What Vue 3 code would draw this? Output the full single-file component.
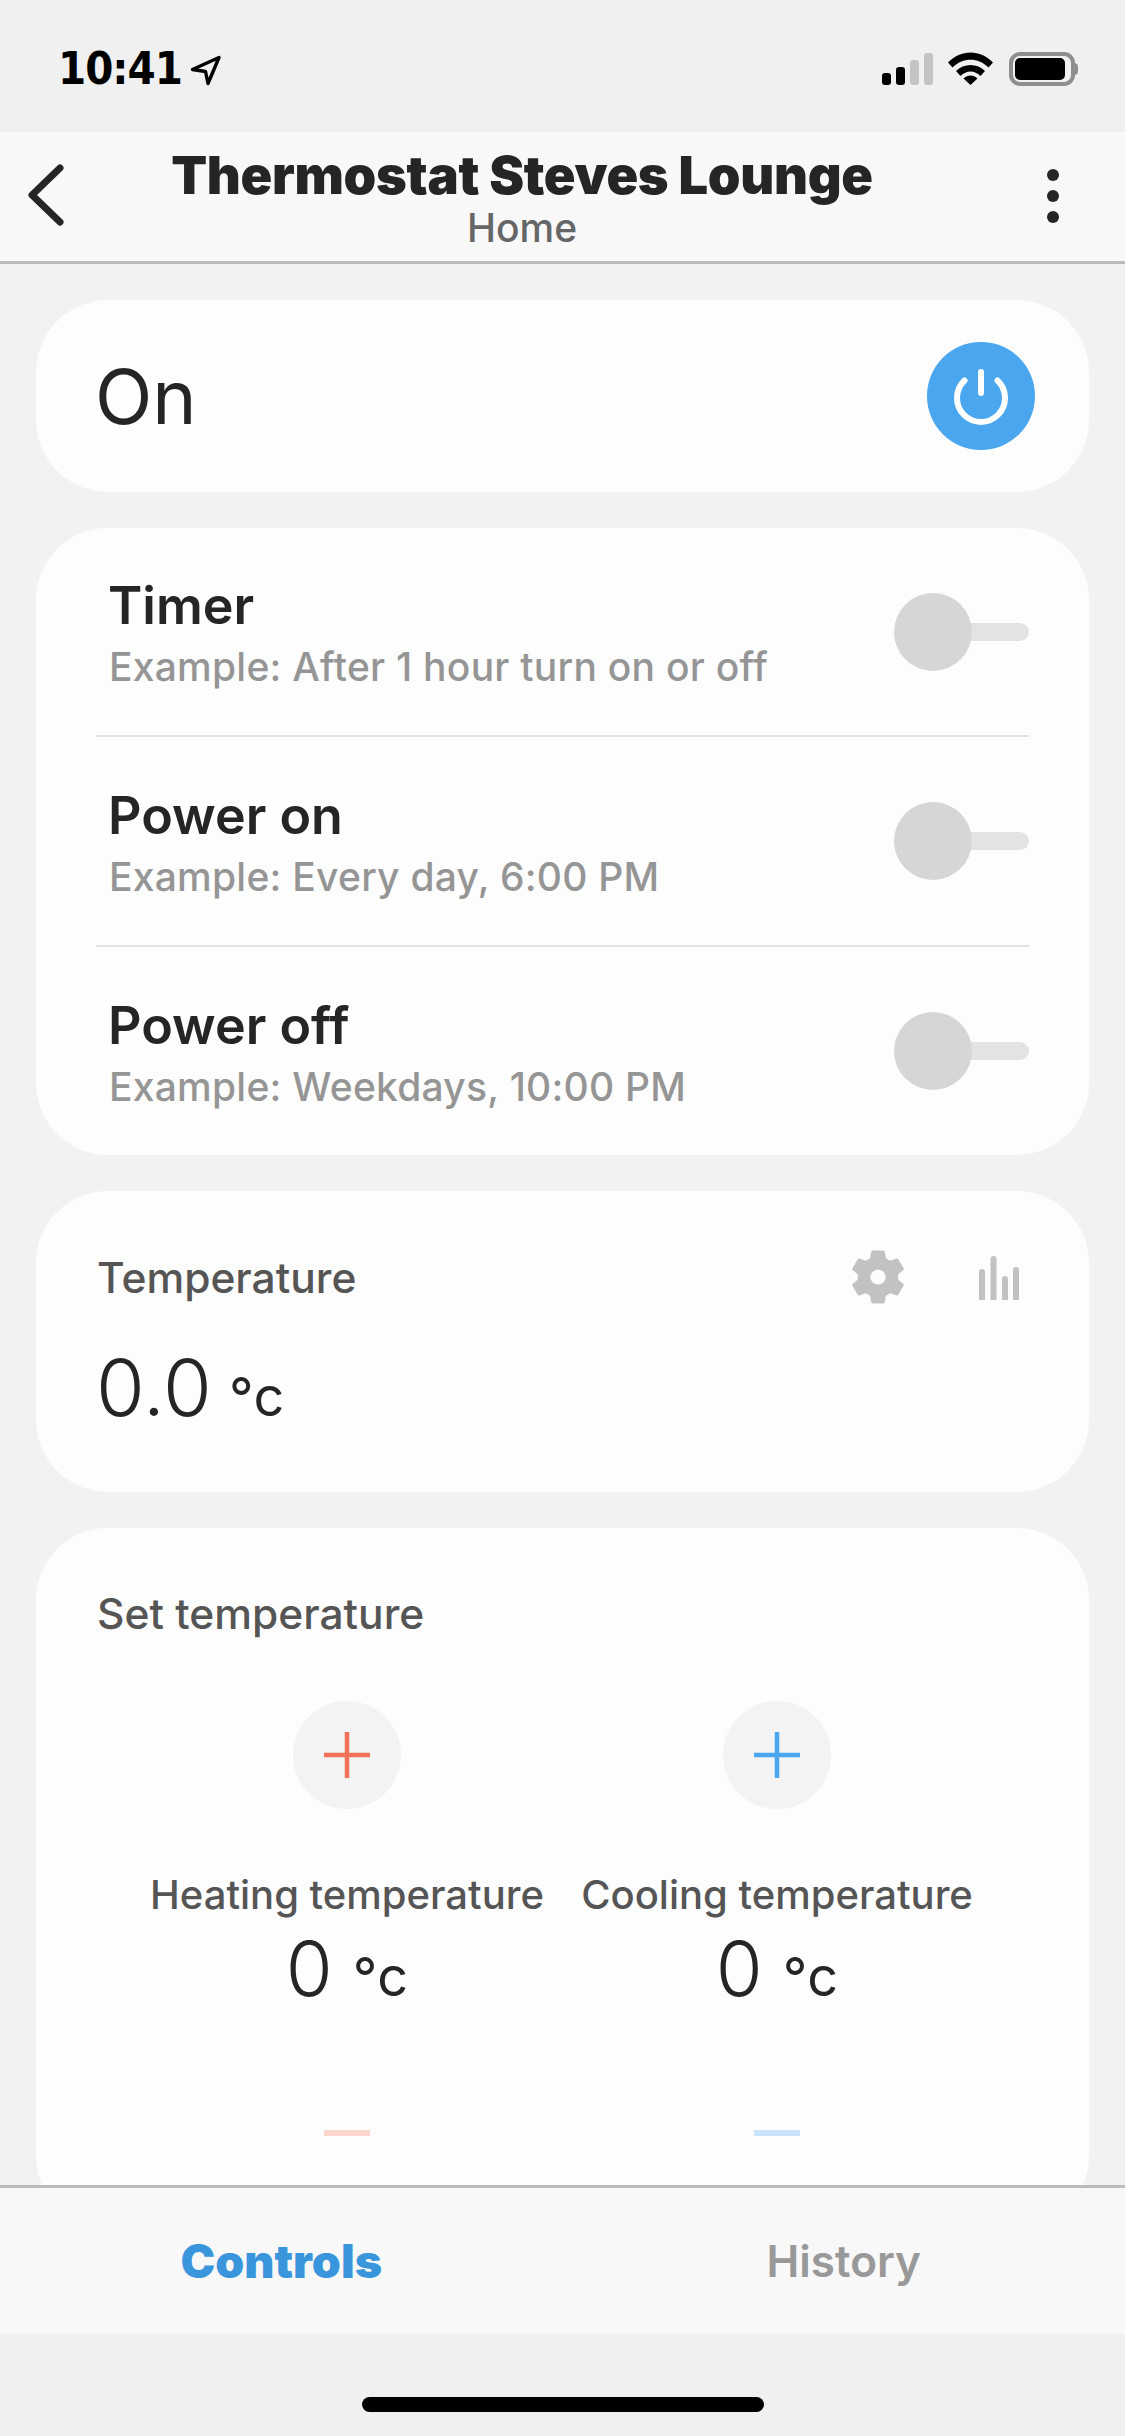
<script setup>
const rows = [
  { title: 'Timer', sub: 'Example: After 1 hour turn on or off' },
  { title: 'Power on', sub: 'Example: Every day, 6:00 PM' },
  { title: 'Power off', sub: 'Example: Weekdays, 10:00 PM' },
]
const setpoints = [
  { label: 'Heating temperature', plus: '#f0705a', minus: '#fcd5cf' },
  { label: 'Cooling temperature', plus: '#4aa6ef', minus: '#c9e3fa' },
]
const pt = (r, deg) => {
  const a = (deg * Math.PI) / 180
  return `${(27 + r * Math.cos(a)).toFixed(2)} ${(27 + r * Math.sin(a)).toFixed(2)}`
}
let gear = ''
for (let k = 0; k < 6; k++) {
  const c = -90 + 60 * k
  gear += `${k ? 'L' : 'M'}${pt(19, c - 20)}L${pt(25.5, c - 12)}L${pt(25.5, c + 12)}L${pt(19, c + 20)}`
}
gear += 'ZM27 18a9 9 0 1 0 0.01 0Z'
</script>

<template>
  <div class="phone">
    <div class="status">
      <div class="clock">
        <span class="time">10:41</span>
        <svg class="arrow" width="31" height="31" viewBox="0 0 31 31"><path d="M2.5 14.5 29 2.5 18 28.5 15.5 16.5Z" fill="none" stroke="#000" stroke-width="3.4" stroke-linejoin="round"/></svg>
      </div>
      <div class="indicators">
        <div class="signal">
          <i class="s1"></i><i class="s2"></i><i class="s3"></i><i class="s4"></i>
        </div>
        <svg width="45" height="33" viewBox="0 0 45 33"><path d="M0 10.5C12.5-3 32.5-3 45 10.5L40.5 15.5C30.5 5 14.5 5 4.5 15.5Z M8 19C15.5 11 29.5 11 37 19L32.5 24C26.5 18 18.5 18 12.5 24Z M15.5 26.5C19.5 22.5 25.5 22.5 29.5 26.5L22.5 33Z" fill="#000"/></svg>
        <div class="battery"><div class="level"></div><div class="cap"></div></div>
      </div>
    </div>

    <header class="nav">
      <svg class="back" width="40" height="62" viewBox="0 0 40 62"><path d="M33 4 5 31 33 58" fill="none" stroke="#252525" stroke-width="7" stroke-linecap="round" stroke-linejoin="round"/></svg>
      <div class="heading">
        <div class="title">Thermostat Steves Lounge</div>
        <div class="subtitle">Home</div>
      </div>
      <div class="dots"><i></i><i></i><i></i></div>
    </header>

    <main class="content">
      <section class="card power">
        <span class="on">On</span>
        <button class="power-btn">
          <svg width="60" height="64" viewBox="0 0 60 64"><path d="M13.5 16.5A24 24 0 1 0 46.500 16.5" fill="none" stroke="#fff" stroke-width="6" stroke-linecap="round"/><path d="M30 8V29" stroke="#fff" stroke-width="6" stroke-linecap="round"/></svg>
        </button>
      </section>

      <section class="card schedule">
        <div v-for="row in rows" :key="row.title" class="row">
          <div class="row-text">
            <div class="row-title">{{ row.title }}</div>
            <div class="row-sub">{{ row.sub }}</div>
          </div>
          <div class="toggle"><div class="knob"></div></div>
        </div>
      </section>

      <section class="card temp">
        <div class="temp-head">
          <span class="label">Temperature</span>
          <div class="temp-icons">
            <svg width="54" height="54" viewBox="0 0 54 54"><path :d="gear" fill="#c2c2c2" fill-rule="evenodd" stroke="#c2c2c2" stroke-width="3" stroke-linejoin="round"/></svg>
            <svg width="40" height="44" viewBox="0 0 40 44"><path d="M0 44V16a3 3 0 0 1 6 0V44ZM11.500 44V3a3 3 0 0 1 6 0V44ZM23 44V23a3 3 0 0 1 6 0V44ZM34 44V14a3 3 0 0 1 6 0V44Z" fill="#c2c2c2"/></svg>
          </div>
        </div>
        <div class="reading"><span class="big">0.0</span><span class="unit">°c</span></div>
      </section>

      <section class="card setpoint">
        <div class="label">Set temperature</div>
        <div class="columns">
          <div v-for="s in setpoints" :key="s.label" class="col">
            <button class="plus-btn">
              <svg width="46" height="46" viewBox="0 0 46 46"><path d="M0 23H46M23 0V46" :stroke="s.plus" stroke-width="4.500"/></svg>
            </button>
            <div class="col-label">{{ s.label }}</div>
            <div class="col-reading"><span class="mid">0</span><span class="unit">°c</span></div>
            <div class="minus" :style="{ background: s.minus }"></div>
          </div>
        </div>
      </section>
    </main>

    <nav class="tabs">
      <span class="tab active">Controls</span>
      <span class="tab">History</span>
    </nav>
    <div class="home"><div class="bar"></div></div>
  </div>
</template>

<style scoped>
.phone {
  width: 1125px;
  height: 2436px;
  display: flex;
  flex-direction: column;
  overflow: hidden;
  background: #f2f2f2;
  font-family: Inter, "Noto Sans", sans-serif;
  color: #252525;
}
.status {
  flex: 0 0 132px;
  background: #f0f0f0;
  display: flex;
  justify-content: space-between;
  align-items: flex-start;
  padding: 52px 50px 0 58px;
  box-sizing: border-box;
}
.clock { display: flex; align-items: center; gap: 8px; height: 33px; }
.time {
  font-family: "DejaVu Sans Condensed", "DejaVu Sans", sans-serif;
  font-weight: 700;
  font-size: 45px;
  line-height: 33px;
  letter-spacing: -1px;
  color: #000;
}
.arrow { margin-top: 3px; }
.indicators { display: flex; align-items: flex-start; gap: 16px; }
.signal { display: flex; align-items: flex-end; gap: 5px; height: 33px; margin-right: -1px; }
.signal i { width: 9px; border-radius: 3px; background: #000; display: block; }
.s1 { height: 12px; }
.s2 { height: 18px; }
.signal .s3 { height: 25px; background: #c4c4c4; }
.signal .s4 { height: 32px; background: #c4c4c4; }
.battery {
  width: 66px;
  height: 34px;
  box-sizing: border-box;
  border: 4px solid #8e8e8e;
  border-radius: 11px;
  padding: 2px;
  position: relative;
}
.level { width: 50px; height: 22px; background: #000; border-radius: 5px; }
.cap {
  position: absolute;
  left: 61px;
  top: 7px;
  width: 4px;
  height: 12px;
  background: #8e8e8e;
  border-radius: 0 6px 6px 0;
}
.nav {
  flex: 0 0 132px;
  box-sizing: border-box;
  background: #f8f8f8;
  border-bottom: 3px solid #bbb;
  display: flex;
  align-items: center;
  justify-content: space-between;
  padding: 0 66px 0 27px;
}
.back { margin-top: -4px; }
.heading { text-align: center; margin: 4px 70px 0 0; }
.title { font-size: 52.400px; font-weight: 900; line-height: 56px; letter-spacing: -0.3px; color: #252525; }
.subtitle { font-size: 39px; line-height: 46px; margin-top: 2px; font-weight: 500; color: #666; }
.dots { display: flex; flex-direction: column; gap: 9px; margin-top: -2px; }
.dots i { width: 12px; height: 12px; border-radius: 50%; background: #252525; display: block; }
.content {
  flex: 1;
  min-height: 0;
  overflow: hidden;
  padding: 36px 36px 0;
  display: flex;
  flex-direction: column;
  gap: 36px;
}
.card { background: #fdfdfd; border-radius: 72px; flex: none; }
.power {
  height: 192px;
  box-sizing: border-box;
  display: flex;
  align-items: center;
  justify-content: space-between;
  padding: 0 54px 0 61px;
}
.on { font-size: 75px; font-weight: 400; line-height: 92px; margin-top: 1px; margin-left: -2px; }
.power-btn {
  width: 108px;
  height: 108px;
  border: 0;
  padding: 0;
  border-radius: 50%;
  background: #4aa6ef;
  display: flex;
  align-items: center;
  justify-content: center;
}
.schedule { height: 627px; padding: 0 60px; box-sizing: border-box; }
.row {
  height: 210px;
  box-sizing: border-box;
  display: flex;
  align-items: center;
  justify-content: space-between;
  padding-left: 13px;
  border-bottom: 2px solid #e3e3e3;
}
.row:first-child { height: 209px; }
.row:last-child { border-bottom: 0; height: 208px; }
.row-text { margin-top: 4px; }
.row-title { font-size: 52px; font-weight: 560; line-height: 60px; margin-left: -1px; }
.row-sub { font-size: 39px; font-weight: 500; line-height: 48px; margin-top: 7px; color: #959595; letter-spacing: 0.25px; }
.toggle {
  width: 135px;
  height: 18px;
  background: #e3e3e3;
  border-radius: 9px;
  position: relative;
}
.knob {
  position: absolute;
  left: 0;
  top: -30px;
  width: 78px;
  height: 78px;
  border-radius: 50%;
  background: #d6d6d6;
}
.temp { height: 301px; padding: 59px 60px 0 61px; box-sizing: border-box; }
.temp-head { display: flex; align-items: flex-start; justify-content: space-between; }
.label { font-size: 42.500px; font-weight: 500; line-height: 56px; color: #555; }
.temp-icons { display: flex; align-items: flex-start; gap: 74px; padding-right: 10px; margin-top: 0; }
.temp-icons svg:last-child { margin-top: 6px; }
.reading { margin-top: 36px; display: flex; align-items: baseline; }
.big { font-size: 79px; font-weight: 340; line-height: 90px; margin-left: -1px; }
.unit { font-size: 54px; font-weight: 400; margin-left: 17px; }
.setpoint { height: 700px; padding: 58px 60px 0 61px; box-sizing: border-box; }
.columns { display: grid; grid-template-columns: 430px 430px; justify-content: start; margin-left: 35px; margin-top: 59px; }
.col { display: flex; flex-direction: column; align-items: center; }
.plus-btn {
  width: 108px;
  height: 108px;
  border: 0;
  padding: 0;
  border-radius: 50%;
  background: #f3f3f3;
  display: flex;
  align-items: center;
  justify-content: center;
}
.col-label { margin-top: 60px; font-size: 40px; font-weight: 500; line-height: 52px; color: #555; white-space: nowrap; }
.col-reading { display: flex; align-items: baseline; line-height: 80px; margin-top: 7px; }
.mid { font-size: 76px; font-weight: 340; }
.col-reading .unit { margin-left: 20px; }
.minus { width: 46px; height: 6px; margin-top: 113px; }
.tabs {
  flex: 0 0 149px;
  box-sizing: border-box;
  background: #f8f8f8;
  border-top: 3px solid #bbb;
  display: grid;
  grid-template-columns: 1fr 1fr;
  align-items: center;
  text-align: center;
}
.tab { font-size: 44px; font-weight: 600; color: #999; }
.tab.active { font-size: 46.500px; font-weight: 900; color: #3a96dc; }
.home {
  flex: 0 0 102px;
  background: #f0f0f0;
  display: flex;
  justify-content: center;
  padding-top: 63px;
  box-sizing: border-box;
}
.bar { width: 402px; height: 15px; border-radius: 8px; background: #000; }
</style>
